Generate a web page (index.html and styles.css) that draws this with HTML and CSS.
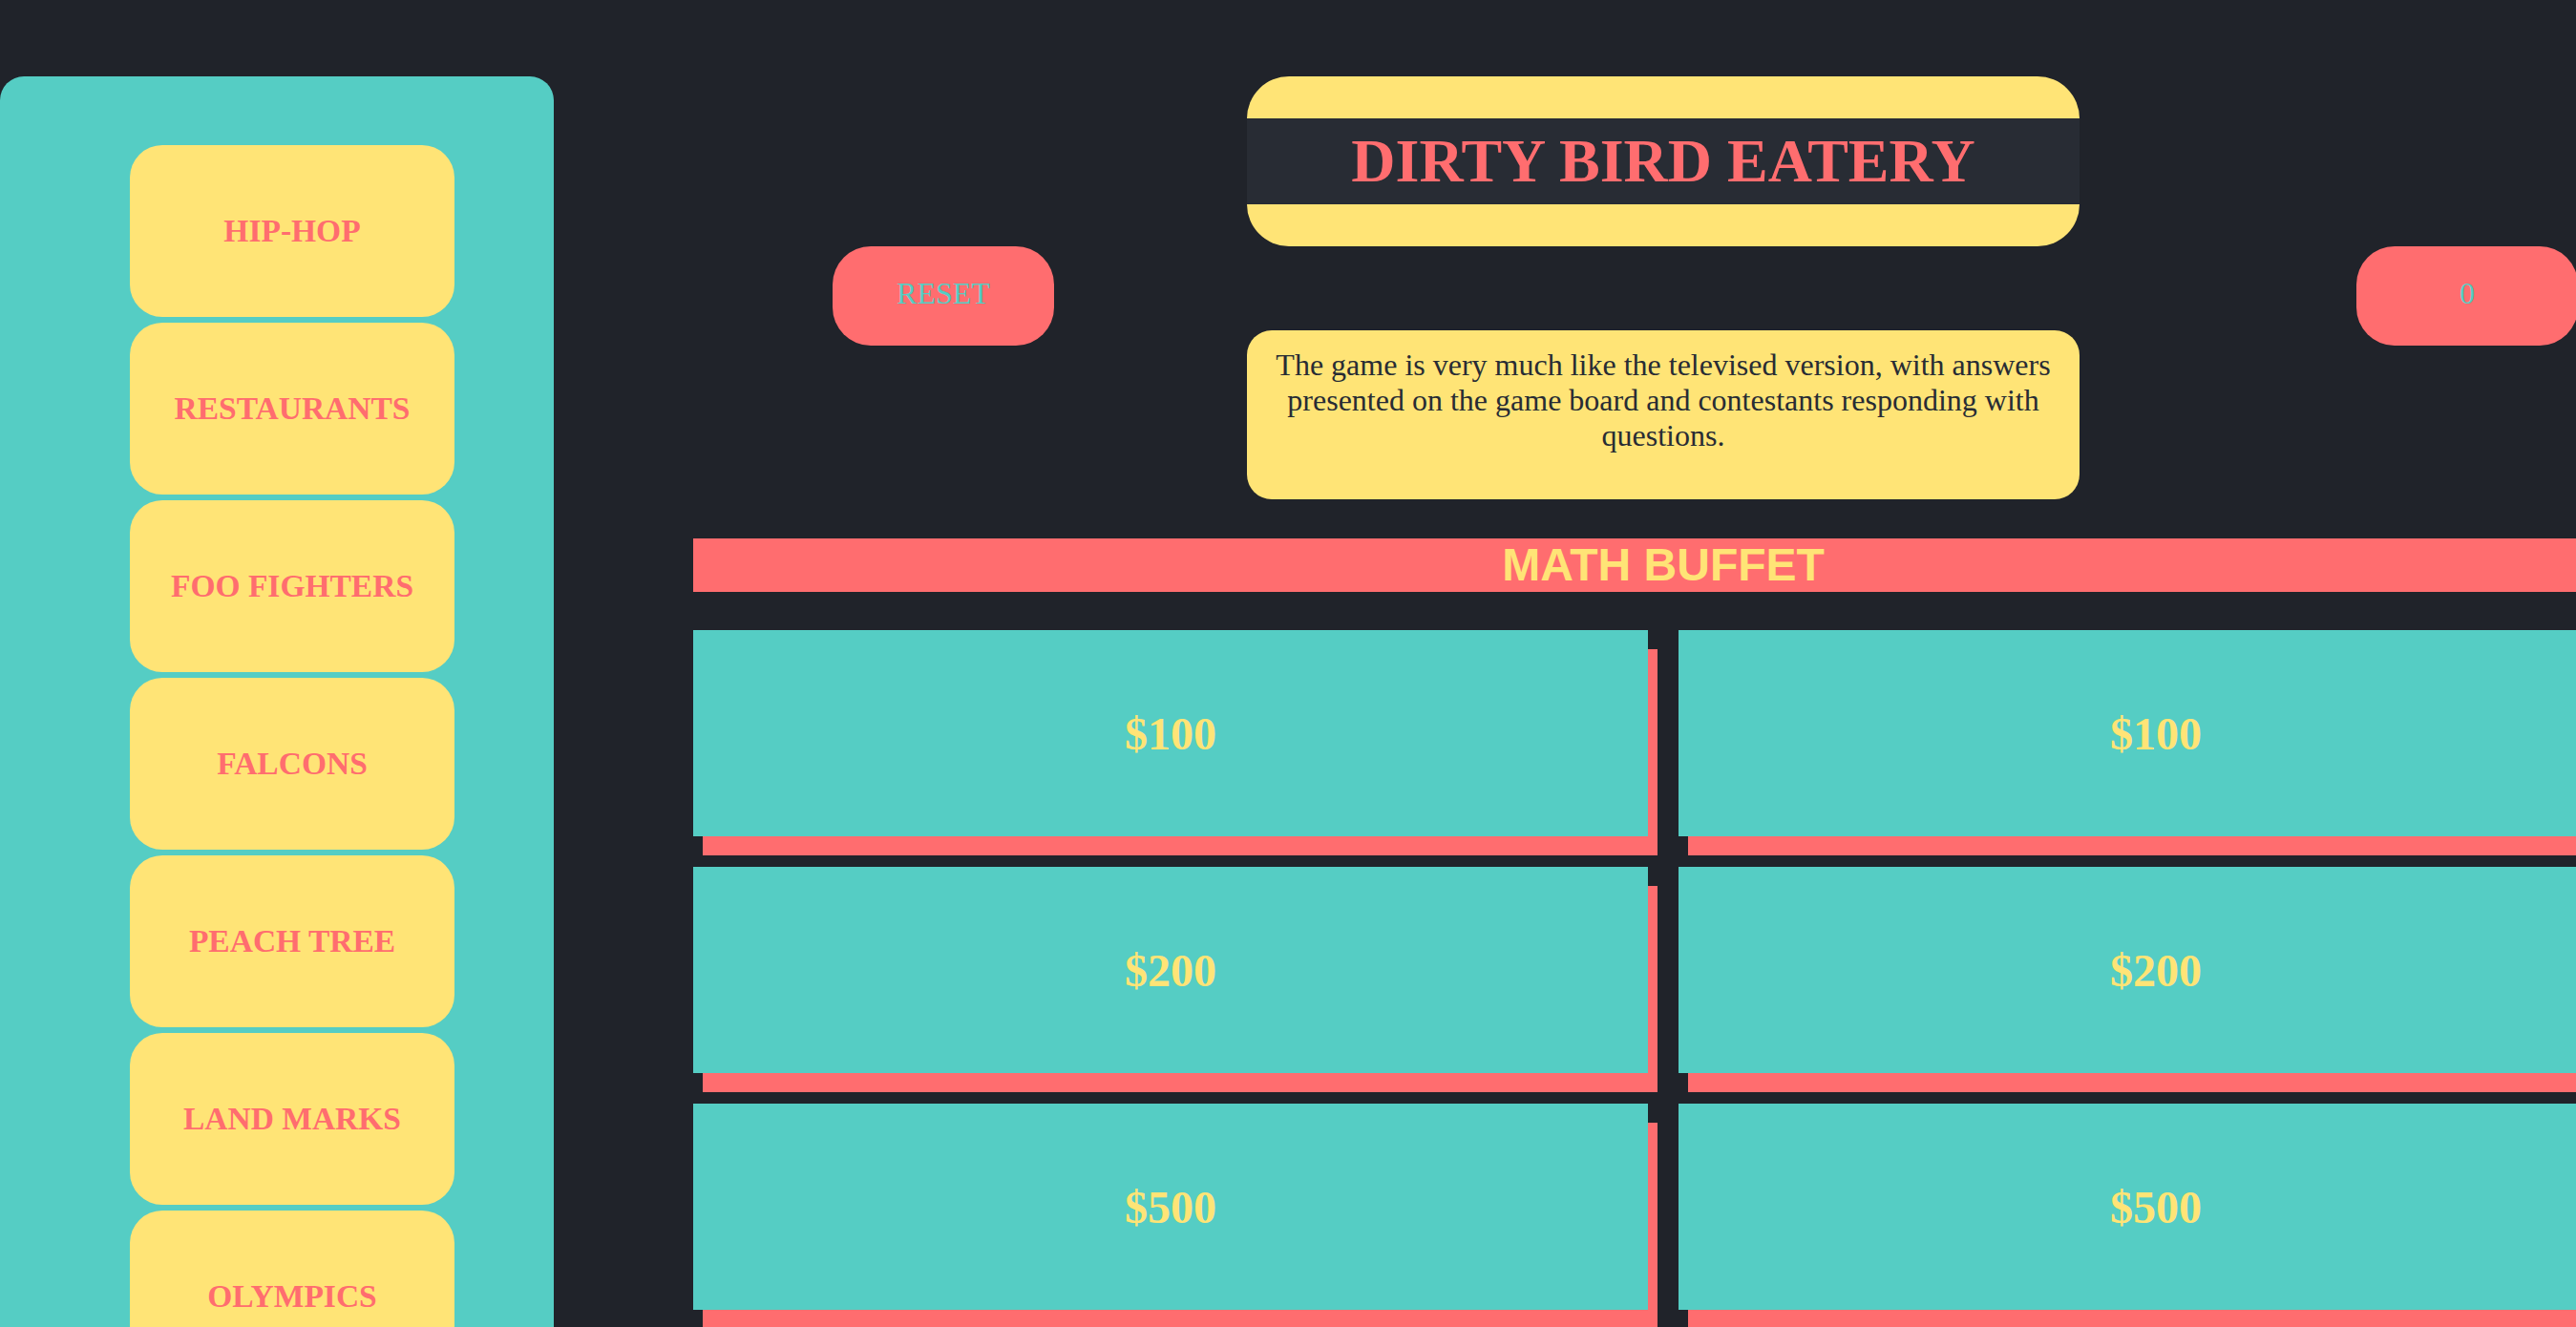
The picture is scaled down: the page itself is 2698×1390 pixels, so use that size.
FILE: index.html
```html
<!DOCTYPE html>
<html>
<head>
<meta charset="utf-8">
<title>Dirty Bird Eatery</title>
<link rel="stylesheet" href="styles.css">
</head>
<body>
<div class="page">
  <aside class="sidebar">
    <ul class="cat-list">
      <li class="cat-btn">HIP-HOP</li>
      <li class="cat-btn">RESTAURANTS</li>
      <li class="cat-btn">FOO FIGHTERS</li>
      <li class="cat-btn">FALCONS</li>
      <li class="cat-btn">PEACH TREE</li>
      <li class="cat-btn">LAND MARKS</li>
      <li class="cat-btn">OLYMPICS</li>
    </ul>
  </aside>
  <main class="main">
    <div class="top-row">
      <button class="pill reset">RESET</button>
      <div class="center-col">
        <header class="title-box">
          <h1 class="title">DIRTY BIRD EATERY</h1>
        </header>
        <div class="desc">
          <p>The game is very much like the televised version, with answers presented on the game board and contestants responding with questions.</p>
        </div>
      </div>
      <button class="pill score">0</button>
    </div>
    <h2 class="category">MATH BUFFET</h2>
    <div class="board">
      <div class="tile">$100</div>
      <div class="tile">$100</div>
      <div class="tile">$200</div>
      <div class="tile">$200</div>
      <div class="tile">$500</div>
      <div class="tile">$500</div>
    </div>
  </main>
</div>
</body>
</html>
```

FILE: styles.css
```css
html, body {
  margin: 0;
  padding: 0;
  overflow: hidden;
  background: #20232a;
  height: 100%;
}

.page {
  display: flex;
  align-items: flex-start;
  font-family: "Liberation Serif", "Times New Roman", serif;
}

.sidebar {
  flex: 0 0 580px;
  width: 580px;
  margin-top: 80px;
  min-height: 1400px;
  background: #55cdc4;
  border-radius: 25px 25px 0 0;
  box-sizing: border-box;
  padding: 72px 0 0 136px;
}

.cat-list {
  list-style: none;
  margin: 0;
  padding: 0;
  display: flex;
  flex-direction: column;
  gap: 6px;
}

.cat-btn {
  width: 340px;
  height: 180px;
  background: #ffe476;
  border-radius: 34px;
  display: flex;
  align-items: center;
  justify-content: center;
  color: #ff6d6f;
  font-weight: bold;
  font-size: 33.5px;
}

.main {
  flex: 0 0 2032px;
  width: 2032px;
  margin-left: 146px;
  margin-top: 80px;
}

.top-row {
  display: flex;
  align-items: flex-start;
}

.pill {
  width: 232px;
  height: 104px;
  margin-top: 178px;
  border: none;
  border-radius: 40px;
  background: #ff6d6f;
  color: #55cdc4;
  font-family: "Liberation Serif", "Times New Roman", serif;
  font-size: 32px;
  padding: 0 0 6px;
  flex: 0 0 auto;
}

.reset {
  margin-left: 146px;
}

.center-col {
  width: 872px;
  margin-left: 202px;
  flex: 0 0 auto;
}

.score {
  margin-left: 290px;
}

.title-box {
  background: #ffe476;
  border-radius: 44px;
  padding: 44px 0;
}

.title {
  margin: 0;
  height: 90px;
  background: #282c34;
  color: #ff6d6f;
  font-size: 64px;
  font-weight: bold;
  text-align: center;
  line-height: 90px;
}

.desc {
  margin-top: 88px;
  height: 177px;
  box-sizing: border-box;
  background: #ffe476;
  border-radius: 26px;
  padding: 18px 24px 0;
}

.desc p {
  margin: 0;
  color: #282c34;
  font-size: 32px;
  line-height: 37px;
  text-align: center;
}

.category {
  margin: 41px 0 0;
  height: 56px;
  background: #ff6d6f;
  color: #ffe476;
  font-family: "Liberation Sans", Arial, sans-serif;
  font-weight: bold;
  font-size: 48px;
  line-height: 56px;
  text-align: center;
}

.board {
  margin-top: 40px;
  display: grid;
  grid-template-columns: 1000px 1000px;
  column-gap: 32px;
  row-gap: 32px;
}

.tile {
  height: 216px;
  background: #55cdc4;
  box-shadow: 10px 20px 0 #ff6d6f;
  display: flex;
  align-items: center;
  justify-content: center;
  color: #ffe476;
  font-weight: bold;
  font-size: 48px;
}
```
